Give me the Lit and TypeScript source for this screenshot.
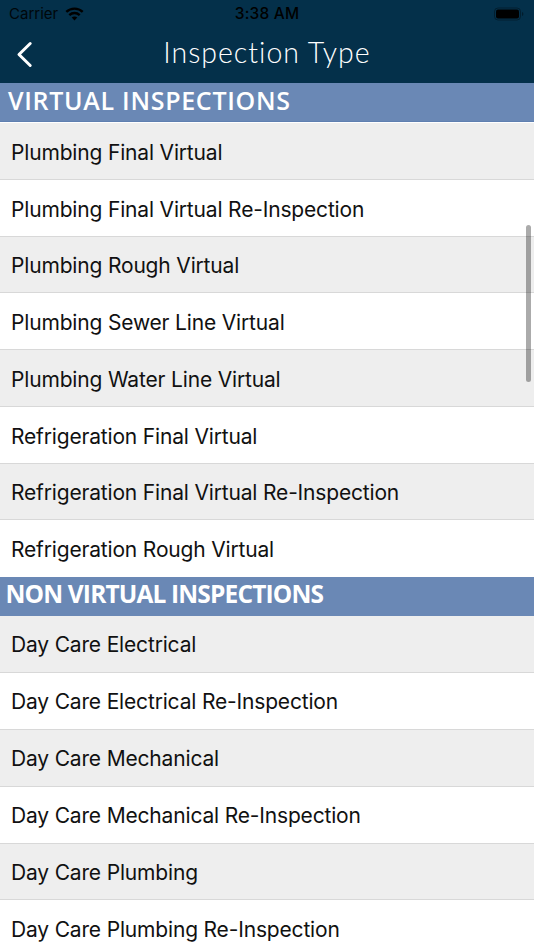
import { LitElement, html, css, svg } from "lit";
import { customElement } from "lit/decorators.js";

const SECTIONS = [
  {
    title: "VIRTUAL INSPECTIONS",
    cls: "first",
    rows: [
      "Plumbing Final Virtual",
      "Plumbing Final Virtual Re-Inspection",
      "Plumbing Rough Virtual",
      "Plumbing Sewer Line Virtual",
      "Plumbing Water Line Virtual",
      "Refrigeration Final Virtual",
      "Refrigeration Final Virtual Re-Inspection",
      "Refrigeration Rough Virtual",
    ],
  },
  {
    title: "NON VIRTUAL INSPECTIONS",
    cls: "second",
    rows: [
      "Day Care Electrical",
      "Day Care Electrical Re-Inspection",
      "Day Care Mechanical",
      "Day Care Mechanical Re-Inspection",
      "Day Care Plumbing",
      "Day Care Plumbing Re-Inspection",
    ],
  },
];

@customElement("app-root")
export class AppRoot extends LitElement {
  static styles = css`
    :host {
      display: block;
      position: relative;
      width: 534px;
      height: 950px;
      overflow: hidden;
      background: #fff;
      font-family: Inter, "Liberation Sans", sans-serif;
    }
    .nav {
      height: 83px;
      background: #04304a;
      display: flex;
      flex-direction: column;
    }
    .status {
      height: 27px;
      display: grid;
      grid-template-columns: 1fr auto 1fr;
      align-items: center;
      padding: 0 9px;
      color: #000;
      font-size: 15px;
    }
    .status-left {
      display: flex;
      align-items: center;
      gap: 7px;
    }
    .status-left span {
      opacity: 0.85;
    }
    .status-time {
      font-weight: 500;
      font-size: 15.5px;
      letter-spacing: 0.2px;
    }
    .status-right {
      display: flex;
      justify-content: flex-end;
      padding-right: 1px;
    }
    .bar {
      flex: 1;
      display: grid;
      grid-template-columns: 1fr auto 1fr;
      align-items: center;
      padding: 0 16px 6px;
    }
    .back {
      display: block;
      margin-top: 4px;
    }
    .title {
      font-family: Lato, sans-serif;
      font-weight: 300;
      font-size: 28.5px;
      letter-spacing: 1px;
      color: #fff;
      line-height: 36px;
    }
    .section {
      height: 39px;
      box-sizing: border-box;
      background: #6a88b5;
      color: #fff;
      font-family: "Open Sans", sans-serif;
      white-space: nowrap;
      font-size: 24.5px;
    }
    .section.first {
      font-weight: 600;
      font-size: 25px;
      letter-spacing: 0.7px;
      line-height: 35px;
      padding-left: 8px;
      border-bottom: 1px solid #5f7fb0;
      margin-bottom: 1px;
    }
    .section.second {
      font-weight: 700;
      letter-spacing: -0.85px;
      line-height: 34px;
      padding-left: 5.5px;
    }
    .row {
      box-sizing: border-box;
      display: flex;
      align-items: center;
      padding-left: 11px;
      font-size: 21px;
      letter-spacing: -0.17px;
      color: #111;
      background: #fff;
      border-bottom: 1px solid #d8d8d8;
      white-space: nowrap;
    }
    .rows-first .row {
      height: 56.75px;
      padding-top: 3px;
    }
    .rows-second .row {
      height: 56.875px;
      padding-top: 2px;
    }
    .row.odd {
      background: #eeeeee;
    }
    .rows-first .row.last {
      border-bottom: none;
      padding-top: 1px;
    }
    .thumb {
      position: absolute;
      left: 526px;
      top: 225px;
      width: 5px;
      height: 157px;
      border-radius: 2.5px;
      background: rgba(0, 0, 0, 0.33);
    }
  `;

  private wifi() {
    return svg`<svg width="19" height="14" viewBox="0 0 19 14" fill="none" stroke="#000" stroke-width="2.4">
      <path d="M1.300 4.900C3.400 2.900 6.300 1.600 9.500 1.600S15.600 2.900 17.700 4.900"/>
      <path d="M4.300 8.100C5.700 6.800 7.500 6 9.500 6S13.300 6.800 14.700 8.100"/>
      <path d="M9.500 13.600l2.800-3c-.7-.7-1.700-1.100-2.800-1.100s-2.100.4-2.800 1.100z" fill="#000" stroke="none"/>
    </svg>`;
  }

  private battery() {
    return svg`<svg width="30" height="14" viewBox="0 0 30 14">
      <rect x="0.5" y="1" width="26" height="12" rx="3.500" fill="none" stroke="#000" stroke-opacity="0.35"/>
      <rect x="2" y="2.500" width="23" height="9" rx="2" fill="#000"/>
      <path d="M28 5v4c.8-.3 1.400-1.100 1.400-2s-.6-1.700-1.400-2z" fill="#000" fill-opacity="0.4"/>
    </svg>`;
  }

  private chevron() {
    return svg`<svg class="back" width="18" height="28" viewBox="0 0 18 28" fill="none">
      <path d="M14.200 3.500 L3 14.500 L14.200 25.500" stroke="#fff" stroke-width="3" stroke-linecap="round" stroke-linejoin="round"/>
    </svg>`;
  }

  render() {
    return html`
      <div class="nav">
        <div class="status">
          <div class="status-left"><span>Carrier</span>${this.wifi()}</div>
          <div class="status-time">3:38 AM</div>
          <div class="status-right">${this.battery()}</div>
        </div>
        <div class="bar">
          <div>${this.chevron()}</div>
          <div class="title">Inspection Type</div>
          <div></div>
        </div>
      </div>
      ${SECTIONS.map(
        (s) => html`
          <div class="section ${s.cls}">${s.title}</div>
          <div class="rows-${s.cls}">
            ${s.rows.map(
              (r, i) => html`<div
                class="row ${i % 2 === 0 ? "odd" : ""} ${s.cls === "first" && i === s.rows.length - 1 ? "last" : ""}"
              >
                ${r}
              </div>`
            )}
          </div>
        `
      )}
      <div class="thumb"></div>
    `;
  }
}
